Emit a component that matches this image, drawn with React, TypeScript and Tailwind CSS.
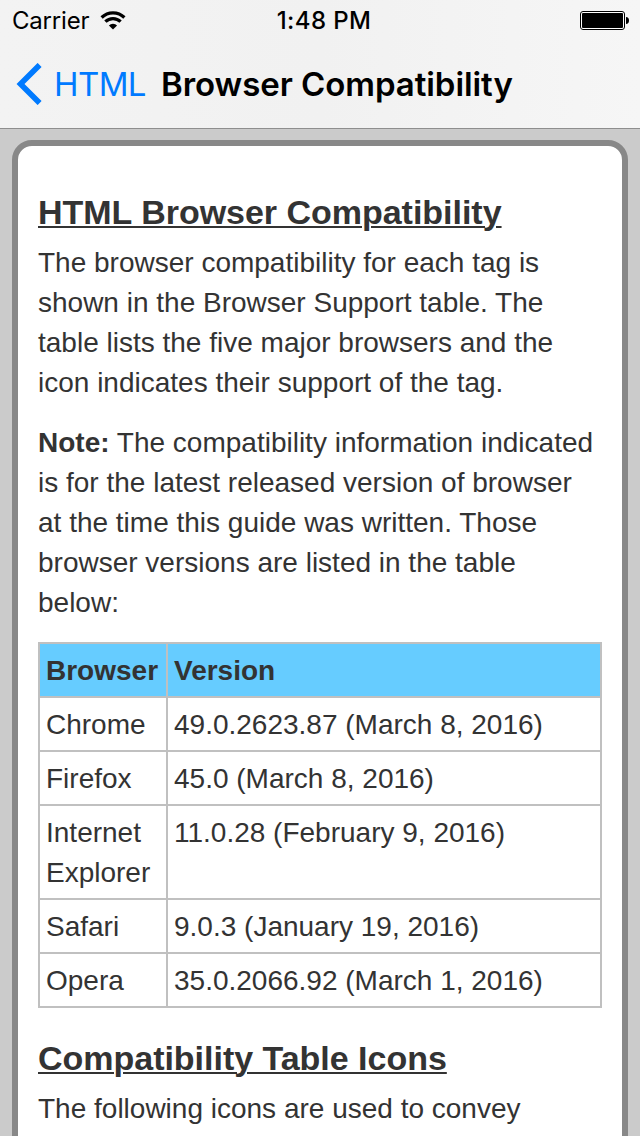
import React from "react";

const browsers = [
  { name: "Chrome", version: "49.0.2623.87 (March 8, 2016)" },
  { name: "Firefox", version: "45.0 (March 8, 2016)" },
  { name: "Internet Explorer", version: "11.0.28 (February 9, 2016)" },
  { name: "Safari", version: "9.0.3 (January 19, 2016)" },
  { name: "Opera", version: "35.0.2066.92 (March 1, 2016)" },
];

const StatusBar = () => (
  <div className="grid h-[41px] grid-cols-3 items-center pl-3 pr-[11px]">
    <div className="flex items-center gap-[11px]">
      <span className="pt-px text-[24px] leading-10 tracking-[-0.2px]">Carrier</span>
      <svg width="26" height="20" viewBox="0 0 26 20" fill="none" stroke="#000" strokeWidth="3.2">
        <path d="M1.600 6.500a16.200 16.200 0 0 1 22.800 0" />
        <path d="M5.400 10.700a10.700 10.700 0 0 1 15.200 0" />
        <path d="M13 18.500 8.900 14.400a5.800 5.800 0 0 1 8.200 0Z" fill="#000" stroke="none" />
      </svg>
    </div>
    <span className="pl-[7px] pt-px text-center text-[24px] font-medium leading-10 tracking-[0.4px]">1:48 PM</span>
    <svg className="justify-self-end" width="49" height="19" viewBox="0 0 49 19">
      <rect x="0.5" y="0.5" width="44" height="18" rx="2.5" fill="#fff" stroke="#000" />
      <rect x="2" y="2" width="41" height="15" rx="1" fill="#000" />
      <path d="M46 6c2 0 3 1.500 3 3.500s-1 3.500-3 3.500Z" fill="#000" />
    </svg>
  </div>
);

const NavBar = () => (
  <div className="flex h-[86px] items-center pl-4">
    <svg width="26" height="42" viewBox="0 0 26 42" fill="none" stroke="#007aff" strokeWidth="5.6">
      <path d="M23.600 1.900 4.500 21l19.100 19.100" />
    </svg>
    <span className="ml-3 w-[107px] whitespace-nowrap text-[33px] leading-10 tracking-[-0.6px] text-[#007aff]">
      HTML
    </span>
    <h1 className="whitespace-nowrap text-[33px] font-semibold leading-10 tracking-[-0.06px]">Browser Compatibility</h1>
  </div>
);

const SectionTitle = ({ children }: { children: React.ReactNode }) => (
  <h2 className="whitespace-nowrap text-[34px] font-bold leading-[50px] tracking-[-0.02px] underline decoration-2 underline-offset-2">
    {children}
  </h2>
);

const App = () => {
  return (
    <div className="flex h-[1136px] w-[640px] flex-col overflow-hidden bg-[#cbcbcb]">
      <header className="h-[129px] shrink-0 border-b border-[#8e8e8e] bg-gradient-to-r from-[#f3f3f3] via-[#f1f1f1] to-[#f6f6f6] font-['Inter',sans-serif] text-black">
        <StatusBar />
        <NavBar />
      </header>

      <main className="mx-3 mt-[11px] h-[1100px] shrink-0 rounded-[20px] border-[6px] border-[#888] bg-white px-5 pt-[41px] font-['Liberation_Sans',Arial,sans-serif] text-[28px] leading-10 text-[#333]">
        <SectionTitle>HTML Browser Compatibility</SectionTitle>
        <p className="mt-[6px] whitespace-nowrap">
          The browser compatibility for each tag is
          <br />
          shown in the Browser Support table. The
          <br />
          table lists the five major browsers and the
          <br />
          icon indicates their support of the tag.
        </p>
        <p className="mt-5 whitespace-nowrap">
          <b>Note:</b> The compatibility information indicated
          <br />
          is for the latest released version of browser
          <br />
          at the time this guide was written. Those
          <br />
          browser versions are listed in the table
          <br />
          below:
        </p>

        <table className="mt-[19px] w-[564px] table-fixed border-collapse text-left">
          <thead>
            <tr className="bg-[#66ccff]">
              <th className="w-[128px] border-2 border-[#c0c0c0] px-[6px] pb-[5px] pt-[7px]">Browser</th>
              <th className="border-2 border-[#c0c0c0] px-[6px] pb-[5px] pt-[7px]">Version</th>
            </tr>
          </thead>
          <tbody>
            {browsers.map((b) => (
              <tr key={b.name}>
                <td className="border-2 border-[#c0c0c0] px-[6px] pb-[5px] pt-[7px] align-top">{b.name}</td>
                <td className="border-2 border-[#c0c0c0] px-[6px] pb-[5px] pt-[7px] align-top">{b.version}</td>
              </tr>
            ))}
          </tbody>
        </table>

        <div className="mt-[25px]">
          <SectionTitle>Compatibility Table Icons</SectionTitle>
          <p className="mt-[6px] whitespace-nowrap">The following icons are used to convey</p>
        </div>
      </main>
    </div>
  );
};

export default App;
